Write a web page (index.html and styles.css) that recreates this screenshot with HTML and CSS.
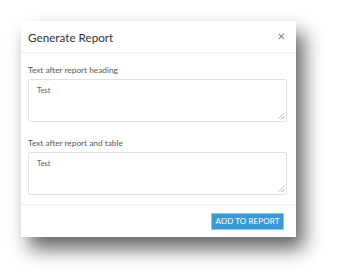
FILE: index.html
```html
<!DOCTYPE html>
<html lang="en">
<head>
    <meta charset="UTF-8">
    <title>Generate Report</title>
    <link rel="stylesheet" href="styles.css">
</head>
<body>
    <div class="modal">
        <div class="modal-header">
            <h2>Generate Report</h2>
            <span class="close">&times;</span>
        </div>

        <div class="modal-body">
            <div class="field">
                <label for="afterHeading">Text after report heading</label>
                <textarea id="afterHeading">Test</textarea>
            </div>
            <div class="field">
                <label for="afterTable">Text after report and table</label>
                <textarea id="afterTable">Test</textarea>
            </div>
        </div>

        <div class="modal-footer">
            <button class="btn-primary">ADD TO REPORT</button>
        </div>
    </div>
</body>
</html>
```

FILE: styles.css
```css
* {
    margin: 0;
    padding: 0;
    box-sizing: border-box;
    font-family: 'Lato', 'Open Sans', sans-serif;
}

html, body {
    background-color: #ffffff;
    min-height: 278px;
}

body {
    padding: 21px 0 0 21px;
}

/* Modal */
.modal {
    width: 275px;
    background: #ffffff;
    box-shadow: 8px 12px 18px rgba(0,0,0,0.6);
}

.modal-header {
    height: 32px;
    padding: 0 11px 0 7px;
    display: flex;
    justify-content: space-between;
    align-items: center;
    border-bottom: 1px solid #efefef;
}

.modal-header h2 {
    font-size: 11.7px;
    font-weight: 400;
    color: #333333;
}

.close {
    font-size: 13px;
    color: #777777;
    line-height: 1;
}

.modal-body {
    padding: 12px 9px 9px 7px;
    border-bottom: 1px solid #efefef;
}

.field + .field {
    margin-top: 16px;
}

.field label {
    display: block;
    font-size: 8.3px;
    color: #5a5a5a;
    height: 10px;
    line-height: 10px;
    margin-bottom: 4px;
}

/* small resize grip drawn in the corner */
.field textarea {
    display: block;
    width: 100%;
    height: 43px;
    border: 1px solid #e2e2e2;
    border-radius: 2px;
    padding: 6px 8px;
    font-size: 7.5px;
    color: #666666;
    resize: none;
    background: linear-gradient(135deg, transparent 45%, #c8c8c8 45%, #c8c8c8 58%, transparent 58%, transparent 72%, #c8c8c8 72%, #c8c8c8 86%, transparent 86%) no-repeat right 2px bottom 2px / 6px 6px;
}

.modal-footer {
    height: 32px;
    display: flex;
    justify-content: flex-end;
    align-items: center;
    padding-right: 12px;
}

.btn-primary {
    background-color: #3a9ad9;
    color: #ffffff;
    border: 1px solid #8cc6ee;
    width: 73px;
    height: 17px;
    font-size: 8px;
    letter-spacing: 0.1px;
    cursor: pointer;
}
```
